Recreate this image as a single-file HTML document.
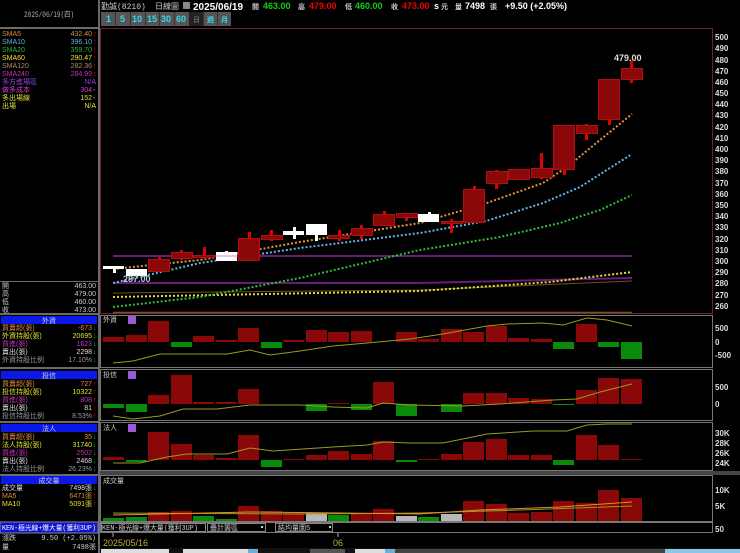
<!DOCTYPE html>
<html><head><meta charset="utf-8"><style>
html,body{margin:0;padding:0;background:#000;width:740px;height:553px;overflow:hidden}
svg{display:block}
text{font-family:"Liberation Sans","Noto Sans CJK TC",sans-serif}
.c{font-family:"Liberation Mono","Noto Sans CJK TC",monospace;font-size:7px}
.ax{font-size:8px;font-weight:bold;fill:#ddd}
</style></head><body>
<svg width="740" height="553" viewBox="0 0 740 553" xmlns="http://www.w3.org/2000/svg">
<rect width="740" height="553" fill="#000"/>
<!-- left panel -->
<rect x="98" y="0" width="2" height="553" fill="#6a6a6a"/>
<rect x="0" y="27" width="98" height="2" fill="#6a6a6a"/>
<text x="24" y="17" class="c" fill="#aaa" textLength="50" lengthAdjust="spacingAndGlyphs" style="font-size:8px">2025/06/19(四)</text>
<g class="c">
<text x="2" y="36" fill="#e08a3a">SMA5</text><text x="92" y="36" fill="#e08a3a" text-anchor="end">432.40</text>
<text x="2" y="44" fill="#5ab4e0">SMA10</text><text x="92" y="44" fill="#5ab4e0" text-anchor="end">396.10</text>
<text x="2" y="52" fill="#30b030">SMA20</text><text x="92" y="52" fill="#30b030" text-anchor="end">359.70</text>
<text x="2" y="60" fill="#e0e030">SMA60</text><text x="92" y="60" fill="#e0e030" text-anchor="end">290.47</text>
<text x="2" y="68" fill="#b09060">SMA120</text><text x="92" y="68" fill="#b09060" text-anchor="end">282.36</text>
<text x="2" y="76" fill="#c030c0">SMA240</text><text x="92" y="76" fill="#c030c0" text-anchor="end">284.99</text>
<text x="2" y="84" fill="#9040e0">多方進場區</text><text x="96" y="84" fill="#9040e0" text-anchor="end">N/A</text>
<text x="2" y="92" fill="#d040d0">做多成本</text><text x="92" y="92" fill="#d040d0" text-anchor="end">304</text>
<text x="2" y="100" fill="#e0e030">多出場線</text><text x="92" y="100" fill="#e0e030" text-anchor="end">152</text>
<text x="2" y="108" fill="#e0e030">出場</text><text x="96" y="108" fill="#e0e030" text-anchor="end">N/A</text>
</g>
<g fill="#f00" font-size="7"><text x="93" y="36">↑</text><text x="93" y="44">↑</text><text x="93" y="52">↑</text><text x="93" y="60">↑</text><text x="93" y="68">↑</text><text x="93" y="76">↑</text></g>
<g fill="#ccc" font-size="7"><text x="93" y="92">-</text><text x="93" y="100">-</text></g>
<rect x="0" y="281" width="98" height="1" fill="#6a6a6a"/>
<g class="c" fill="#ccc">
<text x="2" y="288">開</text><text x="96" y="288" text-anchor="end">463.00</text>
<text x="2" y="296">高</text><text x="96" y="296" text-anchor="end">479.00</text>
<text x="2" y="304">低</text><text x="96" y="304" text-anchor="end">460.00</text>
<text x="2" y="312">收</text><text x="96" y="312" text-anchor="end">473.00</text>
</g>
<rect x="0" y="313" width="98" height="2" fill="#6a6a6a"/>
<!-- 外資 -->
<rect x="1" y="316" width="96" height="8" fill="#0a18e8"/>
<text x="49" y="323" class="c" fill="#ccc" text-anchor="middle">外資</text>
<g class="c">
<text x="2" y="330" fill="#e08a3a">買賣超(張)</text><text x="92" y="330" fill="#e08a3a" text-anchor="end">-673</text>
<text x="2" y="338" fill="#e0e030">外資持股(張)</text><text x="92" y="338" fill="#e0e030" text-anchor="end">20695</text>
<text x="2" y="346" fill="#c030c0">買進(張)</text><text x="92" y="346" fill="#c030c0" text-anchor="end">1623</text>
<text x="2" y="354" fill="#ddd">賣出(張)</text><text x="92" y="354" fill="#ddd" text-anchor="end">2298</text>
<text x="2" y="362" fill="#999">外資持股比例</text><text x="92" y="362" fill="#999" text-anchor="end">17.10%</text>
</g>
<g fill="#0c0" font-size="7"><text x="93" y="330">↓</text><text x="93" y="338">↓</text><text x="93" y="346">↓</text><text x="93" y="354">↓</text><text x="93" y="362">↓</text></g>
<rect x="0" y="367" width="98" height="2" fill="#6a6a6a"/>
<!-- 投信 -->
<rect x="1" y="371" width="96" height="8" fill="#0a18e8"/>
<text x="49" y="378" class="c" fill="#ccc" text-anchor="middle">投信</text>
<g class="c">
<text x="2" y="386" fill="#e08a3a">買賣超(張)</text><text x="92" y="386" fill="#e08a3a" text-anchor="end">727</text>
<text x="2" y="394" fill="#e0e030">投信持股(張)</text><text x="92" y="394" fill="#e0e030" text-anchor="end">10322</text>
<text x="2" y="402" fill="#c030c0">買進(張)</text><text x="92" y="402" fill="#c030c0" text-anchor="end">808</text>
<text x="2" y="410" fill="#ddd">賣出(張)</text><text x="92" y="410" fill="#ddd" text-anchor="end">81</text>
<text x="2" y="418" fill="#999">投信持股比例</text><text x="92" y="418" fill="#999" text-anchor="end">8.53%</text>
</g>
<g fill="#f00" font-size="7"><text x="93" y="386">↑</text><text x="93" y="394">↑</text><text x="93" y="402">↑</text><text x="93" y="410">↑</text><text x="93" y="418">↑</text></g>
<rect x="0" y="421" width="98" height="2" fill="#6a6a6a"/>
<!-- 法人 -->
<rect x="1" y="424" width="96" height="8" fill="#0a18e8"/>
<text x="49" y="431" class="c" fill="#ccc" text-anchor="middle">法人</text>
<g class="c">
<text x="2" y="439" fill="#e08a3a">買賣超(張)</text><text x="92" y="439" fill="#e08a3a" text-anchor="end">35</text>
<text x="2" y="447" fill="#e0e030">法人持股(張)</text><text x="92" y="447" fill="#e0e030" text-anchor="end">31740</text>
<text x="2" y="455" fill="#c030c0">買進(張)</text><text x="92" y="455" fill="#c030c0" text-anchor="end">2502</text>
<text x="2" y="463" fill="#ddd">賣出(張)</text><text x="92" y="463" fill="#ddd" text-anchor="end">2468</text>
<text x="2" y="471" fill="#999">法人持股比例</text><text x="92" y="471" fill="#999" text-anchor="end">26.23%</text>
</g>
<g fill="#0c0" font-size="7"><text x="93" y="439">↓</text><text x="93" y="447">↓</text><text x="93" y="455">↓</text><text x="93" y="463">↓</text><text x="93" y="471">↓</text></g>
<rect x="0" y="474" width="98" height="2" fill="#6a6a6a"/>
<!-- 成交量 -->
<rect x="1" y="476" width="96" height="8" fill="#0a18e8"/>
<text x="49" y="483" class="c" fill="#ccc" text-anchor="middle">成交量</text>
<g class="c">
<text x="2" y="490" fill="#ddd">成交量</text><text x="92" y="490" fill="#ddd" text-anchor="end">7498張</text>
<text x="2" y="498" fill="#e08a3a">MA5</text><text x="92" y="498" fill="#e08a3a" text-anchor="end">6471張</text>
<text x="2" y="506" fill="#e0e030">MA10</text><text x="92" y="506" fill="#e0e030" text-anchor="end">5091張</text>
</g>
<g font-size="7"><text x="93" y="490" fill="#0c0">↓</text><text x="93" y="498" fill="#f00">↑</text><text x="93" y="506" fill="#f00">↑</text></g>
<rect x="0" y="522" width="98" height="11" fill="#1010d0" stroke="#888" stroke-width="1"/>
<text x="2" y="530" class="c" fill="#fff" textLength="94" lengthAdjust="spacingAndGlyphs">KEN-極光線+爆大量(獲利3UP)</text>
<text x="2" y="540" class="c" fill="#ccc">漲跌</text><text x="96" y="540" class="c" fill="#ccc" text-anchor="end">9.50 (+2.05%)</text>
<text x="2" y="549" class="c" fill="#ccc">量</text><text x="96" y="549" class="c" fill="#ccc" text-anchor="end">7498張</text>

<!-- header -->
<text x="101" y="9" class="c" fill="#ccc" style="font-size:8px">勤誠(8210)</text>
<text x="155" y="9" class="c" fill="#ccc" style="font-size:8px">日線圖</text>
<rect x="183" y="2" width="7" height="7" fill="#888"/>
<text x="193" y="10" font-size="10" font-weight="bold" fill="#fff">2025/06/19</text>
<g font-size="9" font-weight="bold">
<text x="252" y="9" class="c" fill="#ccc">開</text><text x="263" y="9" fill="#1c1">463.00</text>
<text x="298" y="9" class="c" fill="#ccc">高</text><text x="309" y="9" fill="#e00">479.00</text>
<text x="345" y="9" class="c" fill="#ccc">低</text><text x="355" y="9" fill="#1c1">460.00</text>
<text x="391" y="9" class="c" fill="#ccc">收</text><text x="402" y="9" fill="#e00">473.00</text>
<text x="434" y="9" fill="#fff">s</text><text x="441" y="9" class="c" fill="#ccc">元</text>
<text x="455" y="9" class="c" fill="#ccc">量</text><text x="465" y="9" fill="#fff">7498</text><text x="490" y="9" class="c" fill="#ccc">張</text>
<text x="505" y="9" fill="#fff">+9.50 (+2.05%)</text>
</g>
<!-- toolbar -->
<g font-size="9" font-weight="bold" fill="#3cd8e8">
<rect x="101" y="12" width="130" height="14" fill="#555"/>
<g stroke="#333" stroke-width="1"><line x1="115.5" y1="12" x2="115.5" y2="26"/><line x1="130.5" y1="12" x2="130.5" y2="26"/><line x1="145.5" y1="12" x2="145.5" y2="26"/><line x1="159.5" y1="12" x2="159.5" y2="26"/><line x1="174.5" y1="12" x2="174.5" y2="26"/><line x1="203.5" y1="12" x2="203.5" y2="26"/><line x1="217.5" y1="12" x2="217.5" y2="26"/></g>
<rect x="189" y="12" width="14" height="14" fill="#222"/>
<text x="106" y="22">1</text><text x="120" y="22">5</text><text x="132" y="22">10</text><text x="147" y="22">15</text><text x="161" y="22">30</text><text x="176" y="22">60</text>
<text x="193" y="22" class="c" fill="#666">日</text><text x="207" y="22" class="c">週</text><text x="221" y="22" class="c">月</text>
</g>

<!-- main chart frame -->
<rect x="100.5" y="28.5" width="612" height="285" fill="none" stroke="#6a2030" stroke-width="1"/>
<g class="ax">
<text x="715" y="40">500</text><text x="715" y="51">490</text><text x="715" y="63">480</text><text x="715" y="74">470</text><text x="715" y="85">460</text><text x="715" y="96">450</text><text x="715" y="107">440</text><text x="715" y="118">430</text><text x="715" y="130">420</text><text x="715" y="141">410</text><text x="715" y="152">400</text><text x="715" y="163">390</text><text x="715" y="174">380</text><text x="715" y="186">370</text><text x="715" y="197">360</text><text x="715" y="208">350</text><text x="715" y="219">340</text><text x="715" y="230">330</text><text x="715" y="242">320</text><text x="715" y="253">310</text><text x="715" y="264">300</text><text x="715" y="275">290</text><text x="715" y="286">280</text><text x="715" y="298">270</text><text x="715" y="309">260</text>
</g>
<line x1="113" y1="256" x2="632" y2="256" stroke="#6a1a7a" stroke-width="2"/>
<polyline points="113,283 420,283 632,278" fill="none" stroke="#6a1a7a" stroke-width="2"/>
<polyline points="113,293 420,290 632,281" fill="none" stroke="#6a5030" stroke-width="1"/>
<line x1="113" y1="312.5" x2="632" y2="312.5" stroke="#7a5020" stroke-width="1.5"/>
<g fill="none" stroke-width="2" stroke-dasharray="2 2">
<polyline stroke="#e0e030" points="113,297 420,291 550,282 632,272"/>
<polyline stroke="#30c030" points="113,307 200,297 300,278 420,250 500,237 560,223 600,210 632,195"/>
<polyline stroke="#60b8e8" points="113,283 200,263 300,248 420,233 486,221 543,203 580,187 632,154"/>
<polyline stroke="#e8903a" points="113,269 200,260 300,242 420,223 487,203 543,183 567,167 600,140 632,114"/>
</g>
<g fill="#e00000">
<rect x="113" y="267" width="3" height="6"/><rect x="136" y="269" width="3" height="7"/><rect x="158" y="257" width="3" height="14"/><rect x="180" y="250" width="3" height="10"/><rect x="203" y="247" width="3" height="12"/><rect x="225" y="251" width="3" height="10"/><rect x="248" y="232" width="3" height="28"/><rect x="270" y="230" width="3" height="11"/><rect x="293" y="227" width="3" height="12"/><rect x="315" y="224" width="3" height="17"/><rect x="338" y="230" width="3" height="11"/><rect x="360" y="225" width="3" height="14"/><rect x="383" y="211" width="3" height="14"/><rect x="405" y="213" width="3" height="8"/><rect x="428" y="212" width="3" height="10"/><rect x="450" y="219" width="3" height="14"/><rect x="473" y="186" width="3" height="36"/><rect x="495" y="170" width="3" height="19"/><rect x="518" y="169" width="3" height="11"/><rect x="540" y="153" width="3" height="26"/><rect x="563" y="125" width="3" height="50"/><rect x="585" y="124" width="3" height="16"/><rect x="608" y="79" width="3" height="46"/><rect x="630" y="61" width="3" height="22"/>
</g>
<g fill="#fff"><rect x="113" y="267" width="3" height="6"/><rect x="136" y="269" width="3" height="7"/><rect x="225" y="251" width="3" height="10"/><rect x="293" y="227" width="3" height="12"/><rect x="315" y="224" width="3" height="17"/><rect x="428" y="212" width="3" height="10"/></g>
<g fill="#8b0808" stroke="#b01010" stroke-width="1">
<rect x="148.5" y="259.5" width="21" height="12"/><rect x="171.5" y="252.5" width="21" height="6"/><rect x="193.5" y="255.5" width="21" height="2"/><rect x="238.5" y="238.5" width="21" height="22"/><rect x="261.5" y="235.5" width="21" height="4"/><rect x="328.5" y="235.5" width="21" height="3"/><rect x="351.5" y="228.5" width="21" height="7"/><rect x="373.5" y="214.5" width="21" height="11"/><rect x="396.5" y="213.5" width="21" height="4"/><rect x="441.5" y="221.5" width="21" height="2"/><rect x="463.5" y="189.5" width="21" height="33"/><rect x="486.5" y="171.5" width="21" height="12"/><rect x="508.5" y="169.5" width="21" height="10"/><rect x="531.5" y="168.5" width="21" height="9"/><rect x="553.5" y="125.5" width="21" height="44"/><rect x="576.5" y="125.5" width="21" height="8"/><rect x="598.5" y="79.5" width="21" height="40"/><rect x="621.5" y="68.5" width="21" height="11"/>
</g>
<g fill="#fff">
<rect x="103" y="266" width="21" height="3"/><rect x="126" y="269" width="21" height="7"/><rect x="216" y="252" width="21" height="9"/><rect x="283" y="231" width="21" height="4"/><rect x="306" y="224" width="21" height="11"/><rect x="418" y="214" width="21" height="8"/>
</g>
<line x1="216" y1="256" x2="237" y2="256" stroke="#e080e0" stroke-width="1"/>
<text x="614" y="61" font-size="9" font-weight="bold" fill="#ddd">479.00</text>
<text x="123" y="282" font-size="9" font-weight="bold" fill="#b8c8d8">287.00</text>

<g fill="none" stroke="#777" stroke-width="1">
<rect x="100.5" y="315.5" width="612" height="52"/>
<rect x="100.5" y="369.5" width="612" height="51"/>
<rect x="100.5" y="422.5" width="612" height="48"/>
<rect x="100.5" y="475.5" width="612" height="46"/>
</g>
<rect x="100" y="471" width="640" height="4" fill="#444"/>
<g class="c" fill="#ccc"><text x="103" y="322">外資</text><text x="103" y="377">投信</text><text x="103" y="430">法人</text><text x="103" y="483">成交量</text></g>
<g fill="#9a5ad8"><rect x="128" y="316" width="8" height="8"/><rect x="128" y="371" width="8" height="8"/><rect x="128" y="424" width="8" height="8"/></g>
<g fill="#8b0808">
<rect x="103" y="337" width="21" height="5"/><rect x="126" y="335" width="21" height="7"/><rect x="148" y="321" width="21" height="21"/><rect x="193" y="336" width="21" height="6"/><rect x="216" y="340" width="21" height="2"/><rect x="238" y="328" width="21" height="14"/><rect x="283" y="340" width="21" height="2"/><rect x="306" y="330" width="21" height="12"/><rect x="328" y="332" width="21" height="10"/><rect x="351" y="331" width="21" height="11"/><rect x="396" y="332" width="21" height="10"/><rect x="418" y="339" width="21" height="3"/><rect x="441" y="329" width="21" height="13"/><rect x="463" y="332" width="21" height="10"/><rect x="486" y="326" width="21" height="16"/><rect x="508" y="338" width="21" height="4"/><rect x="531" y="339" width="21" height="3"/><rect x="576" y="324" width="21" height="18"/>
</g>
<g fill="#0a8a0a"><rect x="171" y="342" width="21" height="5"/><rect x="261" y="342" width="21" height="6"/><rect x="553" y="342" width="21" height="7"/><rect x="598" y="342" width="21" height="5"/><rect x="621" y="342" width="21" height="17"/></g>
<polyline fill="none" stroke="#9a9a20" stroke-width="1" points="113,363 133,361 160,354 227,354 250,350 270,355 300,351 333,346 367,343 410,339 443,334 487,326 507,324 543,323 563,325 587,318 607,320 632,326"/>
<g class="ax"><text x="715" y="331">500</text><text x="715" y="345">0</text><text x="715" y="358">-500</text></g>
<g fill="#8b0808">
<rect x="148" y="395" width="21" height="9"/><rect x="171" y="375" width="21" height="29"/><rect x="193" y="402" width="21" height="2"/><rect x="216" y="402" width="21" height="2"/><rect x="238" y="389" width="21" height="15"/><rect x="328" y="403" width="21" height="1"/><rect x="373" y="382" width="21" height="22"/><rect x="463" y="393" width="21" height="11"/><rect x="486" y="393" width="21" height="11"/><rect x="508" y="398" width="21" height="6"/><rect x="531" y="399" width="21" height="5"/><rect x="576" y="390" width="21" height="14"/><rect x="598" y="378" width="21" height="26"/><rect x="621" y="379" width="21" height="25"/>
</g>
<g fill="#0a8a0a"><rect x="103" y="404" width="21" height="4"/><rect x="126" y="404" width="21" height="8"/><rect x="306" y="404" width="21" height="7"/><rect x="351" y="404" width="21" height="6"/><rect x="396" y="404" width="21" height="12"/><rect x="441" y="404" width="21" height="8"/><rect x="553" y="404" width="21" height="1"/></g>
<polyline fill="none" stroke="#9a9a20" stroke-width="1" points="113,416 133,419 160,416 183,409 217,409 250,405 300,405 333,407 367,408 383,403 410,405 463,406 500,404 553,400 577,399 600,392 632,384"/>
<g class="ax"><text x="715" y="390">500</text><text x="715" y="407">0</text></g>
<g fill="#8b0808">
<rect x="103" y="457" width="21" height="3"/><rect x="148" y="432" width="21" height="28"/><rect x="171" y="444" width="21" height="16"/><rect x="193" y="455" width="21" height="5"/><rect x="216" y="458" width="21" height="2"/><rect x="238" y="435" width="21" height="25"/><rect x="283" y="459" width="21" height="1"/><rect x="306" y="455" width="21" height="5"/><rect x="328" y="451" width="21" height="9"/><rect x="351" y="454" width="21" height="6"/><rect x="373" y="441" width="21" height="19"/><rect x="418" y="459" width="21" height="1"/><rect x="441" y="454" width="21" height="6"/><rect x="463" y="442" width="21" height="18"/><rect x="486" y="439" width="21" height="21"/><rect x="508" y="455" width="21" height="5"/><rect x="531" y="455" width="21" height="5"/><rect x="576" y="435" width="21" height="25"/><rect x="598" y="445" width="21" height="15"/><rect x="621" y="459" width="21" height="1"/>
</g>
<g fill="#0a8a0a"><rect x="126" y="460" width="21" height="2"/><rect x="261" y="460" width="21" height="7"/><rect x="396" y="460" width="21" height="2"/><rect x="553" y="460" width="21" height="5"/></g>
<polyline fill="none" stroke="#9a9a20" stroke-width="1" points="113,463 140,463 167,457 187,454 227,454 250,448 273,451 333,447 367,445 383,442 410,443 443,443 487,434 533,431 567,431 587,425 607,424 632,424"/>
<g class="ax"><text x="715" y="436">30K</text><text x="715" y="446">28K</text><text x="715" y="456">26K</text><text x="715" y="466">24K</text></g>
<g fill="#8b0808">
<rect x="148" y="512" width="21" height="9"/><rect x="171" y="511" width="21" height="10"/><rect x="238" y="506" width="21" height="15"/><rect x="261" y="511" width="21" height="10"/><rect x="283" y="513" width="21" height="8"/><rect x="351" y="513" width="21" height="8"/><rect x="373" y="509" width="21" height="12"/><rect x="463" y="501" width="21" height="20"/><rect x="486" y="504" width="21" height="17"/><rect x="508" y="513" width="21" height="8"/><rect x="531" y="512" width="21" height="9"/><rect x="553" y="501" width="21" height="20"/><rect x="576" y="503" width="21" height="18"/><rect x="598" y="490" width="21" height="31"/><rect x="621" y="498" width="21" height="23"/>
</g>
<g fill="#0a8a0a"><rect x="103" y="518" width="21" height="3"/><rect x="126" y="517" width="21" height="4"/><rect x="193" y="516" width="21" height="5"/><rect x="216" y="519" width="21" height="2"/><rect x="328" y="515" width="21" height="6"/><rect x="418" y="517" width="21" height="4"/></g>
<g fill="#b8b8b8"><rect x="306" y="513" width="21" height="8"/><rect x="396" y="516" width="21" height="5"/><rect x="441" y="514" width="21" height="7"/></g>
<polyline fill="none" stroke="#9a9a20" stroke-width="1" points="113,513 300,514 420,513 520,510 632,506"/>
<polyline fill="none" stroke="#e88a2a" stroke-width="1" points="113,515 250,512 420,514 480,510 560,507 632,502"/>
<g class="ax"><text x="715" y="493">10K</text><text x="715" y="509">5K</text><text x="715" y="532">50</text></g>
<rect x="100.5" y="522.5" width="612" height="10" fill="#000" stroke="#777"/>
<rect x="101.5" y="523.5" width="104" height="8" fill="#000" stroke="#888"/>
<text x="102" y="530" class="c" fill="#ccc" textLength="96" lengthAdjust="spacingAndGlyphs">KEN-極光線+爆大量(獲利3UP)</text>
<rect x="207.5" y="523.5" width="58" height="8" fill="#000" stroke="#888"/>
<text x="210" y="530" class="c" fill="#ccc">疊計籌區</text>
<rect x="261" y="526" width="2" height="2" fill="#ccc"/>
<rect x="275.5" y="523.5" width="57" height="8" fill="#000" stroke="#888"/>
<text x="278" y="530" class="c" fill="#ccc">結均量圖5</text>
<rect x="329" y="526" width="2" height="2" fill="#ccc"/>
<line x1="113" y1="533" x2="113" y2="537" stroke="#aaa"/>
<line x1="338" y1="533" x2="338" y2="537" stroke="#aaa"/>
<text x="103" y="546" font-size="9" fill="#c0b040">2025/05/16</text>
<text x="333" y="546" font-size="9" fill="#c0b040">06</text>
<rect x="100" y="548" width="640" height="5" fill="#111"/>
<rect x="101" y="549" width="68" height="4" fill="#ddd"/>
<rect x="183" y="549" width="65" height="4" fill="#ddd"/>
<rect x="248" y="549" width="10" height="4" fill="#6ab0d8"/>
<rect x="310" y="549" width="35" height="4" fill="#555"/>
<rect x="355" y="549" width="30" height="4" fill="#ddd"/>
<rect x="385" y="549" width="10" height="4" fill="#6ab0d8"/>
<rect x="395" y="549" width="270" height="4" fill="#444"/>
<rect x="665" y="549" width="75" height="4" fill="#8ac8e8"/>
</svg>
</body></html>
